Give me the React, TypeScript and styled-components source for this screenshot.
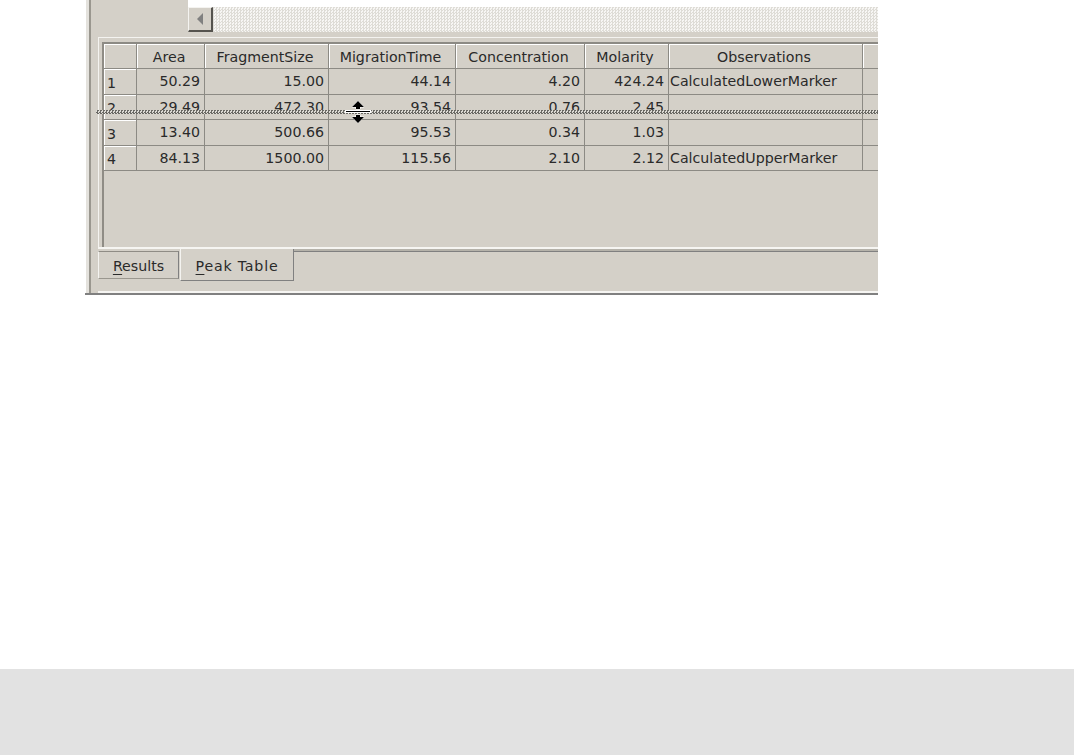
import React from "react";
import styled, { createGlobalStyle } from "styled-components";

const Global = createGlobalStyle`
  html, body { margin: 0; padding: 0; background: #fff; }
  #root { width: 1074px; height: 755px; overflow: hidden; }
`;

const Page = styled.div`
  width: 1074px;
  height: 755px;
  display: flex;
  flex-direction: column;
  justify-content: space-between;
  background: #fff;
`;

const Stage = styled.div`
  padding-left: 85px;
`;

const Win = styled.div`
  width: 793px;
  height: 295px;
  box-sizing: border-box;
  overflow: hidden;
  background: linear-gradient(90deg, #fff 0 1px, #e4e2dd 1px);
  border-bottom: 2px solid #808080;
  padding-left: 4px;
  font-family: "DejaVu Sans", Verdana, sans-serif;
  font-size: 14.2px;
  color: #2a2a2a;
`;

const Inner = styled.div`
  height: 293px;
  box-sizing: border-box;
  background: #d4d0c8;
  border-left: 2px solid #9a978f;
  display: flex;
  flex-direction: column;
`;

const TopRow = styled.div`
  height: 37px;
  display: flex;
  flex-shrink: 0;
`;

const Side = styled.div`
  width: 97px;
  flex-shrink: 0;
`;

const ScrollArea = styled.div`
  flex: 1;
  display: flex;
  flex-direction: column;
`;

const WhiteStrip = styled.div`
  height: 7px;
  background: #fff;
`;

const ScrollBar = styled.div`
  height: 25px;
  display: flex;
  background-image: repeating-conic-gradient(#dedcd6 0 25%, #f7f6f4 0 50%);
  background-size: 3px 3px;
`;

const ScrollBtn = styled.div`
  width: 25px;
  height: 25px;
  box-sizing: border-box;
  background: #d4d0c8;
  border-style: solid;
  border-width: 1px 2px 2px 1px;
  border-color: #f4f3f0 #55534e #55534e #f4f3f0;
  display: flex;
  align-items: center;
  justify-content: center;
`;

const GridFrame = styled.div`
  position: relative;
  margin-left: 7px;
  height: 210px;
  flex-shrink: 0;
  box-sizing: border-box;
  border-top: 1px solid #f4f3f0;
  border-left: 1px solid #f4f3f0;
  padding: 4px 0 0 3px;
`;

const Grid = styled.div`
  height: 100%;
  border-left: 2px solid #8f8c85;
`;

const Row = styled.div`
  display: flex;
  height: 25.5px;
  box-sizing: border-box;
  border-bottom: 1px solid #8c8a84;
`;

const HeadRow = styled(Row)`
  height: 27px;
  border-top: 2px solid #8c8a84;
`;

const Cell = styled.div<{ $w: number; $left?: boolean; $head?: boolean }>`
  width: ${(p) => p.$w}px;
  flex-shrink: 0;
  box-sizing: border-box;
  border-right: 1px solid #8c8a84;
  padding: ${(p) => (p.$head ? "2px 3px 0 0" : p.$left ? "0 0 0 1px" : "0 4px 0 0")};
  display: flex;
  align-items: center;
  justify-content: ${(p) => (p.$head ? "center" : p.$left ? "flex-start" : "flex-end")};
  white-space: nowrap;
  box-shadow: ${(p) => (p.$head ? "inset 1px 1px 0 #fff" : "none")};
`;

const RowHead = styled(Cell)`
  box-shadow: inset 1px 1px 0 #fff;
  padding: 3px 0 0 3px;
`;

const Dither = styled.div`
  position: absolute;
  left: -3px;
  right: 0;
  top: 72px;
  height: 4px;
  background-image: repeating-conic-gradient(#6a6964 0 25%, #dddbd5 0 50%);
  background-size: 3px 3px;
`;

const ResizeCursor = styled.svg`
  position: absolute;
  left: 245px;
  top: 62px;
`;

const TabBand = styled.div`
  height: 2px;
  flex-shrink: 0;
  margin-left: 7px;
  background: #f6f5f2;
`;

const TabStrip = styled.div`
  flex: 1;
  min-height: 0;
  margin-left: 7px;
  display: flex;
  align-items: flex-start;
  border-bottom: 2px solid #f6f5f2;
`;

const Tab = styled.div`
  margin-top: 2px;
  margin-right: 1px;
  height: 28px;
  width: 81px;
  flex-shrink: 0;
  box-sizing: border-box;
  padding-top: 2px;
  display: flex;
  align-items: center;
  justify-content: center;
  border-top: 1px solid #8f8c85;
  border-right: 1px solid #808080;
  border-bottom: 1px solid #9a978f;
  border-left: 1px solid #f4f3f0;
`;

const ActiveTab = styled.div`
  height: 32px;
  width: 114px;
  flex-shrink: 0;
  box-sizing: border-box;
  padding: 2px 0 0 0;
  letter-spacing: 0.8px;
  display: flex;
  align-items: center;
  justify-content: center;
  border-right: 1px solid #808080;
  border-bottom: 1px solid #808080;
  border-left: 1px solid #f4f3f0;
`;

const TabFiller = styled.div`
  flex: 1;
  height: 3px;
  background: linear-gradient(#b5b2aa 0 2px, #808080 2px);
`;

const U = styled.span`
  text-decoration: underline;
  text-underline-offset: 3px;
`;

const Footer = styled.div`
  height: 86px;
  background: #e2e2e2;
`;

const cols = [33, 68, 124, 127, 129, 84, 194, 30];
const heads = ["", "Area", "FragmentSize", "MigrationTime", "Concentration", "Molarity", "Observations", ""];
const rows = [
  ["1", "50.29", "15.00", "44.14", "4.20", "424.24", "CalculatedLowerMarker"],
  ["2", "29.49", "472.30", "93.54", "0.76", "2.45", ""],
  ["3", "13.40", "500.66", "95.53", "0.34", "1.03", ""],
  ["4", "84.13", "1500.00", "115.56", "2.10", "2.12", "CalculatedUpperMarker"],
];

export default function App() {
  return (
    <Page>
      <Global />
      <Stage>
        <Win>
          <Inner>
            <TopRow>
              <Side />
              <ScrollArea>
                <WhiteStrip />
                <ScrollBar>
                  <ScrollBtn>
                    <svg width="6" height="12" viewBox="0 0 6 12">
                      <path d="M6 0v12L0 6z" fill="#808080" />
                    </svg>
                  </ScrollBtn>
                </ScrollBar>
              </ScrollArea>
            </TopRow>
            <GridFrame>
              <Grid>
                <HeadRow>
                  {heads.map((h, i) => (
                    <Cell key={i} $w={cols[i]} $head>
                      {h}
                    </Cell>
                  ))}
                </HeadRow>
                {rows.map((r) => (
                  <Row key={r[0]}>
                    <RowHead $w={cols[0]} $left>
                      {r[0]}
                    </RowHead>
                    {r.slice(1).map((v, i) => (
                      <Cell key={i} $w={cols[i + 1]} $left={i === 5}>
                        {v}
                      </Cell>
                    ))}
                    <Cell $w={cols[7]} />
                  </Row>
                ))}
              </Grid>
              <Dither />
              <ResizeCursor width="28" height="24" viewBox="0 0 28 24">
                <path d="M14 1l6 6h-4v2h-4V7H8z" fill="#000" stroke="#fff" strokeWidth="1" paintOrder="stroke" />
                <path d="M14 23l6-6h-4v-2h-4v2H8z" fill="#000" stroke="#fff" strokeWidth="1" paintOrder="stroke" />
                <rect x="1" y="10" width="26" height="3" fill="#fff" />
                <rect x="2" y="11" width="24" height="1" fill="#000" />
              </ResizeCursor>
            </GridFrame>
            <TabBand />
            <TabStrip>
              <Tab>
                <span>
                  <U>R</U>esults
                </span>
              </Tab>
              <ActiveTab>
                <span>
                  <U>P</U>eak Table
                </span>
              </ActiveTab>
              <TabFiller />
            </TabStrip>
          </Inner>
        </Win>
      </Stage>
      <Footer />
    </Page>
  );
}
